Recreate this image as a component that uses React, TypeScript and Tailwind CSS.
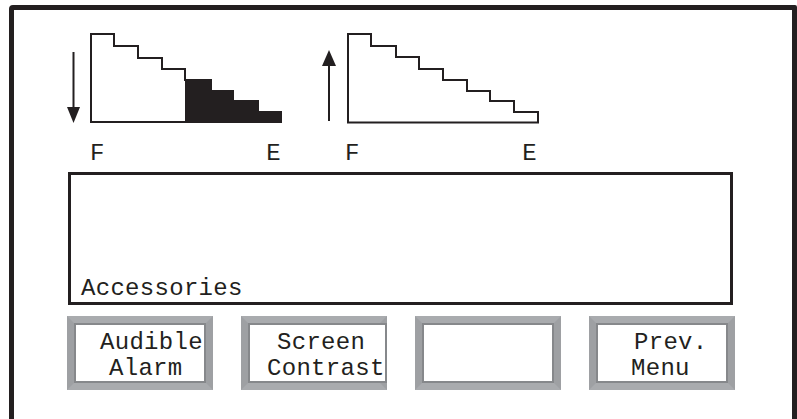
const mono = "font-['Liberation_Mono','Courier_New',monospace] text-[24px] tracking-[0.3px] leading-[26px] text-[#231f20]"

function Gauges() {
  return (
    <svg width="490" height="100" viewBox="0 0 490 100" className="block">
      {/* left: draining */}
      <line x1="13.5" y1="22" x2="13.5" y2="79" stroke="#231f20" strokeWidth="2" />
      <polygon points="7,77 20,77 13.5,93" fill="#231f20" />
      <path d="M125,92 V50 H151 V61 H173 V71 H198 V82 H221 V92 Z" fill="#231f20" />
      <path
        d="M31,4 H54 V16 H78 V28 H102 V39 H125 V50 H151 V61 H173 V71 H198 V82 H221 V92 H31 Z"
        fill="none"
        stroke="#231f20"
        strokeWidth="2"
      />
      {/* right: filling */}
      <line x1="269" y1="34" x2="269" y2="91" stroke="#231f20" strokeWidth="2" />
      <polygon points="262,36 276,36 269,20" fill="#231f20" />
      <path
        d="M288,4 H311 V16 H336 V27 H359 V39 H383 V50 H407 V61 H430 V71 H454 V82 H478 V92.5 H288 Z"
        fill="none"
        stroke="#231f20"
        strokeWidth="2"
      />
    </svg>
  )
}

type Line = { text: string; pl: string }

function Key({ lines }: { lines: Line[] }) {
  return (
    <div className="w-[146px] h-[74px] flex border-[7px] border-t-[#a9abae] border-b-[#a9abae] border-l-[#9ea0a3] border-r-[#9ea0a3]">
      <div className="flex-1 flex flex-col border-2 border-[#86888b] bg-white pt-[5px]">
        {lines.map((l, i) => (
          <div key={i} className={`${mono} whitespace-nowrap ${l.pl}`}>
            {l.text}
          </div>
        ))}
      </div>
    </div>
  )
}

export default function App() {
  return (
    <div className="w-[797px] h-[419px] overflow-hidden bg-white">
      <div className="ml-[9px] mt-[5px] w-[788px] h-[440px] border-[5px] border-[#231f20] rounded-tl-[4px] rounded-tr-[2px]">
        <div className="ml-[46px] mt-[20px]">
          <Gauges />
        </div>

        <div className={`flex mt-[11px] ml-[76px] ${mono}`}>
          <div className="w-[191px] flex justify-between">
            <span>F</span>
            <span>E</span>
          </div>
          <div className="ml-[64px] w-[192px] flex justify-between">
            <span>F</span>
            <span>E</span>
          </div>
        </div>

        <div className="ml-[54px] mt-[5px] w-[665px] h-[133px] border-[3px] border-[#231f20] flex flex-col justify-end pl-[10px]">
          <div className={`${mono} leading-[24px]`}>Accessories</div>
        </div>

        <div className="ml-[53px] mt-[11px] w-[668px] flex justify-between">
          <Key lines={[{ text: 'Audible', pl: 'pl-[24px]' }, { text: 'Alarm', pl: 'pl-[33px]' }]} />
          <Key lines={[{ text: 'Screen', pl: 'pl-[27px]' }, { text: 'Contrast', pl: 'pl-[17px]' }]} />
          <Key lines={[]} />
          <Key lines={[{ text: 'Prev.', pl: 'pl-[36px]' }, { text: 'Menu', pl: 'pl-[33px]' }]} />
        </div>
      </div>
    </div>
  )
}
